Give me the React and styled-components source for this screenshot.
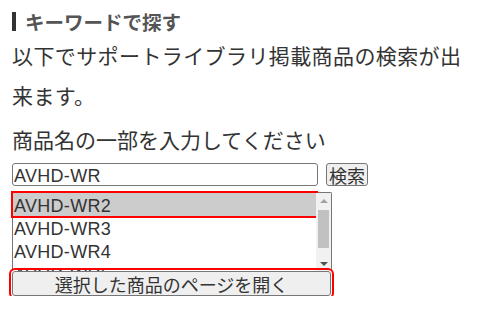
import React, { useState } from 'react'
import styled, { createGlobalStyle } from 'styled-components'

const GlobalStyle = createGlobalStyle`
    body {
        margin: 0;
        background: #fff;
        font-family: "Noto Sans CJK JP", "Noto Sans", sans-serif;
        color: #333;
    }
`

const products = ['AVHD-WR2', 'AVHD-WR3', 'AVHD-WR4', 'AVHD-WR5']

export default function App() {
    const [selected, setSelected] = useState(0)

    return (
        <Page>
            <GlobalStyle />
            <Heading>キーワードで探す</Heading>
            <Lead>以下でサポートライブラリ掲載商品の検索が出来ます。</Lead>
            <Label>商品名の一部を入力してください</Label>
            <SearchRow>
                <SearchInput defaultValue="AVHD-WR" />
                <SmallButton>検索</SmallButton>
            </SearchRow>
            <ListBox>
                <Options>
                    {products.map((p, i) => (
                        <Option key={p} $active={i === selected} onClick={() => setSelected(i)}>
                            {p}
                        </Option>
                    ))}
                </Options>
                <ScrollBar>
                    <Arrow $up />
                    <Track><Thumb /></Track>
                    <Arrow />
                </ScrollBar>
            </ListBox>
            <OpenButton>選択した商品のページを開く</OpenButton>
        </Page>
    )
}

const Page = styled.div`
    padding: 11px 12px 0;
    width: 458px;
`

const Heading = styled.div`
    display: flex;
    align-items: center;
    gap: 9px;
    height: 20px;
    font-family: "Noto Sans CJK JP", sans-serif;
    font-size: 19.5px;
    font-weight: 700;
    color: #555;

    &:before {
        content: "";
        flex: none;
        width: 4px;
        height: 19px;
        background: #333;
    }
`

const Lead = styled.p`
    margin: 4px 0 0;
    font-size: 21px;
    line-height: 40px;
    letter-spacing: 0.4px;
`

const Label = styled.p`
    margin: 4px 0 0;
    font-size: 21px;
    line-height: 40px;
`

const SearchRow = styled.div`
    display: flex;
    gap: 8px;
    margin-top: 4px;
`

const SearchInput = styled.input`
    box-sizing: border-box;
    width: 306px;
    height: 23px;
    padding: 3px 1px 0;
    border: 1px solid #767676;
    border-radius: 3px;
    font-family: "Liberation Sans", sans-serif;
    font-size: 18px;
    letter-spacing: 0.3px;
    color: #333;
`

const SmallButton = styled.button`
    box-sizing: border-box;
    height: 23px;
    padding: 0 2px;
    background: #efefef;
    border: 1px solid #767676;
    border-radius: 3px;
    font-family: "Noto Sans CJK JP", sans-serif;
    font-size: 18px;
    line-height: 1;
    color: #333;
`

const ListBox = styled.div`
    box-sizing: border-box;
    display: flex;
    width: 320px;
    height: 79px;
    margin-top: 6px;
    border: 1px solid #767676;
    border-bottom: none;
    border-radius: 2px 2px 0 0;
`

const Options = styled.div`
    flex: 1;
`

const Option = styled.div`
    height: 23px;
    line-height: 26px;
    padding-left: 1px;
    font-family: "Liberation Sans", sans-serif;
    font-size: 18px;
    letter-spacing: 0.3px;
    color: #333;
    background: ${p => (p.$active ? '#cccccc' : '#fff')};
    outline: ${p => (p.$active ? '2px solid #f00' : 'none')};
`

const ScrollBar = styled.div`
    width: 15px;
    display: flex;
    flex-direction: column;
    background: #f1f1f1;
`

const Arrow = styled.div`
    height: 15px;
    display: flex;
    align-items: center;
    justify-content: center;

    &:after {
        content: "";
        border-left: 4px solid transparent;
        border-right: 4px solid transparent;
        ${p => (p.$up ? 'border-bottom: 4px solid #a3a3a3;' : 'border-top: 4px solid #505050;')}
    }
`

const Track = styled.div`
    flex: 1;
    padding: 2px 2px 0;
`

const Thumb = styled.div`
    height: 38px;
    background: #c1c1c1;
`

const OpenButton = styled.button`
    position: relative;
    box-sizing: border-box;
    display: block;
    width: 319px;
    height: 25px;
    background: #efefef;
    border: 1px solid #767676;
    border-radius: 3px;
    outline: 2px solid #f00;
    outline-offset: 1px;
    font-family: "Noto Sans CJK JP", sans-serif;
    font-size: 18px;
    line-height: 1;
    color: #333;
`
